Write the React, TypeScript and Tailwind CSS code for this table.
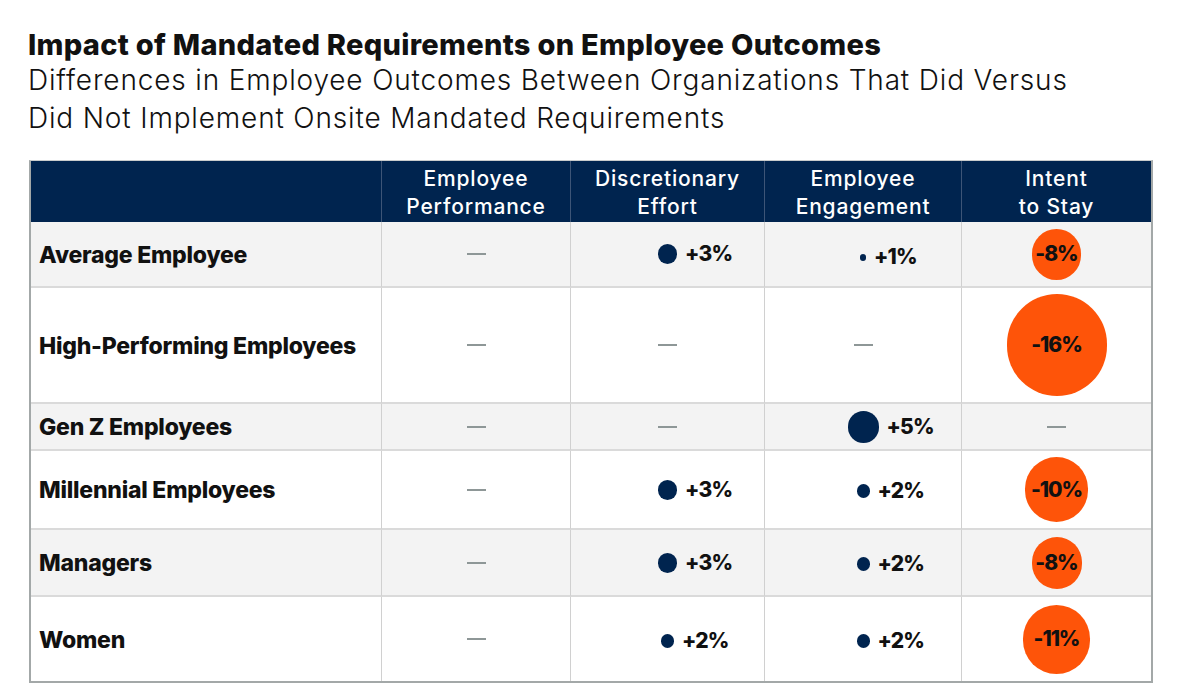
type Cell =
  | { kind: "dash" }
  | { kind: "dot"; size: number; text: string; dy?: number }
  | { kind: "orange"; size: number; text: string; dy?: number };

type Row = { label: string; h: number; shade: boolean; cells: Cell[] };

const dash: Cell = { kind: "dash" };
const dot = (size: number, text: string, dy = 0): Cell => ({ kind: "dot", size, text, dy });
const orange = (size: number, text: string, dy = 0): Cell => ({ kind: "orange", size, text, dy });

const columns = [
  ["Employee", "Performance"],
  ["Discretionary", "Effort"],
  ["Employee", "Engagement"],
  ["Intent", "to Stay"],
];

const rows: Row[] = [
  { label: "Average Employee", h: 66, shade: true, cells: [dash, dot(19, "+3%"), dot(6, "+1%", 6), orange(49, "-8%")] },
  { label: "High-Performing Employees", h: 116, shade: false, cells: [dash, dash, dash, orange(100, "-16%")] },
  { label: "Gen Z Employees", h: 47, shade: true, cells: [dash, dash, dot(31, "+5%"), dash] },
  { label: "Millennial Employees", h: 79, shade: false, cells: [dash, dot(19, "+3%"), dot(13, "+2%", 2), orange(63, "-10%")] },
  { label: "Managers", h: 67, shade: true, cells: [dash, dot(19, "+3%"), dot(13, "+2%", 3), orange(50, "-8%")] },
  { label: "Women", h: 84, shade: false, cells: [dash, dot(13, "+2%", 3), dot(13, "+2%", 3), orange(67, "-11%")] },
];

function Value({ cell }: { cell: Cell }) {
  if (cell.kind === "dash") {
    return <div className="h-[2px] w-[19px] bg-[#8e9797]" />;
  }
  if (cell.kind === "orange") {
    return (
      <div
        className="flex items-center justify-center rounded-full bg-[#fe5409] text-[21px] font-extrabold tracking-[-0.05em] text-[#111]"
        style={{ width: cell.size, height: cell.size + 2, marginTop: cell.dy }}
      >
        {cell.text}
      </div>
    );
  }
  return (
    <div className="grid w-full grid-cols-[1fr_auto_1fr] items-center" style={{ marginTop: cell.dy }}>
      <span />
      <span className="rounded-full bg-[#00244f]" style={{ width: cell.size, height: cell.size + 1 }} />
      <span className="pl-[8px] text-[21px] font-extrabold tracking-[-0.04em] text-[#111]">{cell.text}</span>
    </div>
  );
}

export default function App() {
  return (
    <div className="h-[700px] w-[1183px] bg-white font-['Inter',sans-serif] text-[#111]">
      <div className="pl-[28px] pt-[29px]">
        <h1 className="text-[29px] font-extrabold leading-[32px] tracking-[0.01em]">
          Impact of Mandated Requirements on Employee Outcomes
        </h1>
        <p className="text-[28px] font-light leading-[38px] tracking-[0.03em]">
          Differences in Employee Outcomes Between Organizations That Did Versus
          <br />
          Did Not Implement Onsite Mandated Requirements
        </p>
      </div>

      <div className="ml-[29px] mt-[23px] w-[1124px] border-2 border-t border-[#a3a8a8] border-t-[#c9cccc]">
        <div className="grid grid-cols-[351px_189px_194px_197px_189px]">
          <div className="h-[61px] border-r border-[#3d5577] bg-[#00244f]" />
          {columns.map((c, i) => (
            <div
              key={i}
              className={`flex h-[61px] flex-col items-center justify-center bg-[#00244f] pt-[3px] text-[21px] font-medium leading-[28px] tracking-[0.04em] text-white ${
                i < 3 ? "border-r border-[#3d5577]" : ""
              }`}
            >
              <span>{c[0]}</span>
              <span>{c[1]}</span>
            </div>
          ))}

          {rows.map((r, ri) => {
            const bg = r.shade ? "bg-[#f3f3f3]" : "bg-white";
            const line = ri < rows.length - 1 ? "border-b-2 border-b-[#dadada]" : "";
            return [
              <div
                key={`l${ri}`}
                className={`flex items-center border-r border-r-[#d0d0d0] pl-[8px] pt-[2px] text-[23px] font-extrabold tracking-[-0.01em] ${bg} ${line}`}
                style={{ height: r.h }}
              >
                {r.label}
              </div>,
              ...r.cells.map((c, ci) => (
                <div
                  key={`c${ri}-${ci}`}
                  className={`flex items-center justify-center ${ci < 3 ? "border-r border-r-[#d0d0d0]" : ""} ${bg} ${line}`}
                  style={{ height: r.h }}
                >
                  <Value cell={c} />
                </div>
              )),
            ];
          })}
        </div>
      </div>
    </div>
  );
}
